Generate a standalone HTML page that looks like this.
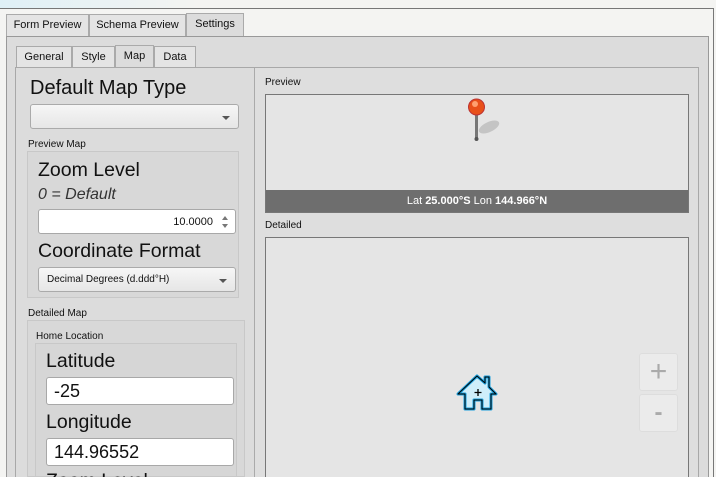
<!DOCTYPE html><html style="width:716px;height:477px;overflow:hidden"><head><style>
*{box-sizing:border-box;margin:0;padding:0}
body{width:716px;height:477px;overflow:hidden;background:#f4f4f2;font-family:"Liberation Sans","DejaVu Sans",sans-serif;position:relative;color:#111}
.a{position:absolute}
.tab{position:absolute;border:1px solid #aaa;border-bottom:none;font-size:11px;padding-top:4px;text-align:center;background:#e4e4e4}
.big{position:absolute;font-size:19.5px;color:#111}
.lab{position:absolute;font-size:10px}
.box{position:absolute;border:1px solid #c8c8c8;background:#d8d8d8}
.inp{position:absolute;background:#fff;border:1px solid #a8a8a8;border-radius:3px}
.combo{position:absolute;border:1px solid #aaa;border-radius:3px;background:linear-gradient(#f6f6f6,#e6e6e6);font-size:10px;padding:6px 8px}
.arr{position:absolute;right:8px;top:11px;width:0;height:0;border-left:4px solid transparent;border-right:4px solid transparent;border-top:4px solid #555}
</style></head><body>
<div class="a" style="left:0;top:0;width:200px;height:8px;background:linear-gradient(90deg,#dff0f6,#f4f4f2)"></div>
<div class="a" style="left:0;top:8px;width:714px;height:469px;border-top:1px solid #777;border-right:1px solid #777;background:#f4f4f2"></div>
<div class="tab" style="left:6px;top:14px;width:83px;height:22px">Form Preview</div>
<div class="tab" style="left:89px;top:14px;width:97px;height:22px">Schema Preview</div>
<div class="tab" style="left:186px;top:13px;width:58px;height:24px;background:#dcdcdc">Settings</div>
<div class="a" style="left:6px;top:36px;width:703px;height:441px;border:1px solid #999;border-bottom:none;background:#dcdcdc"></div>
<div class="tab" style="left:16px;top:46px;width:56px;height:21px">General</div>
<div class="tab" style="left:72px;top:46px;width:43px;height:21px">Style</div>
<div class="tab" style="left:115px;top:45px;width:39px;height:23px;background:#dcdcdc">Map</div>
<div class="tab" style="left:154px;top:46px;width:42px;height:21px">Data</div>
<div class="a" style="left:15px;top:67px;width:684px;height:410px;border:1px solid #a8a8a8;border-bottom:none;background:#dcdcdc"></div>
<div class="a" style="left:254px;top:68px;width:1px;height:409px;background:#aaa"></div>
<div class="a" style="left:255px;top:68px;width:443px;height:409px;background:#dedede"></div>

<div class="big" style="left:30px;top:77px;font-size:20px">Default Map Type</div>
<div class="combo" style="left:30px;top:104px;width:209px;height:25px"><div class="arr"></div></div>
<div class="lab" style="left:28px;top:139px">Preview Map</div>
<div class="box" style="left:27px;top:151px;width:212px;height:147px"></div>
<div class="big" style="left:38px;top:159px">Zoom Level</div>
<div class="big" style="left:38px;top:186px;font-size:16px;font-style:italic;color:#333">0 = Default</div>
<div class="inp" style="left:38px;top:209px;width:198px;height:25px;font-size:11px;text-align:right;padding:6px 22px 0 0">10.0000
<div class="a" style="right:7px;top:6px;border-left:3px solid transparent;border-right:3px solid transparent;border-bottom:4px solid #777"></div>
<div class="a" style="right:7px;top:14px;border-left:3px solid transparent;border-right:3px solid transparent;border-top:4px solid #777"></div></div>
<div class="big" style="left:38px;top:240px">Coordinate Format</div>
<div class="combo" style="left:38px;top:267px;width:198px;height:25px">Decimal Degrees (d.ddd°H)<div class="arr"></div></div>
<div class="lab" style="left:28px;top:308px">Detailed Map</div>
<div class="box" style="left:27px;top:320px;width:218px;height:157px"></div>
<div class="lab" style="left:36px;top:331px">Home Location</div>
<div class="box" style="left:35px;top:343px;width:202px;height:134px;background:#d6d6d6"></div>
<div class="big" style="left:46px;top:350px">Latitude</div>
<div class="inp" style="left:46px;top:377px;width:188px;height:28px;font-size:18px;padding:3px 0 0 7px">-25</div>
<div class="big" style="left:46px;top:411px">Longitude</div>
<div class="inp" style="left:46px;top:438px;width:188px;height:28px;font-size:18px;padding:3px 0 0 7px">144.96552</div>
<div class="a" style="left:46px;top:468px;width:150px;height:9px;overflow:hidden"><div class="big" style="left:0;top:2px">Zoom Level</div></div>

<div class="lab" style="left:265px;top:77px">Preview</div>
<div class="a" style="left:265px;top:94px;width:424px;height:119px;border:1px solid #777;background:#e5e5e5"></div>
<div class="a" style="left:266px;top:190px;width:422px;height:22px;background:#6e6e6e;color:#fff;font-size:11px;text-align:center;padding-top:5px">Lat <b>25.000°S</b> Lon <b>144.966°N</b></div>
<svg class="a" style="left:465px;top:96px" width="40" height="48">
<ellipse cx="24" cy="31" rx="11" ry="5" fill="#c4c4c4" transform="rotate(-25 24 31)"/>
<rect x="10" y="18" width="3" height="25" fill="#777"/>
<circle cx="11.5" cy="43" r="2" fill="#555"/>
<circle cx="11.5" cy="11" r="8" fill="#e8501a" stroke="#b33" stroke-width="1"/>
<circle cx="10" cy="8" r="3" fill="#ffa070"/>
</svg>
<div class="lab" style="left:265px;top:220px">Detailed</div>
<div class="a" style="left:265px;top:237px;width:424px;height:240px;border:1px solid #777;border-bottom:none;background:#e5e5e5"></div>
<svg class="a" style="left:455px;top:372px" width="46" height="42">
<path d="M3 22 L22 4 L30 11 L30 5 L34 5 L34 15 L41 22 L36 22 L36 37 L27 37 L27 28 L19 28 L19 37 L10 37 L10 22 Z" fill="#cfeefa" stroke="#1aa0dd" stroke-width="3" stroke-linejoin="round"/>
<path d="M3 22 L22 4 L30 11 L30 5 L34 5 L34 15 L41 22 L36 22 L36 37 L27 37 L27 28 L19 28 L19 37 L10 37 L10 22 Z" fill="none" stroke="#000" stroke-width="1" stroke-linejoin="round"/>
<path d="M23 17v7M19.5 20.5h7" stroke="#000" stroke-width="1.3"/>
</svg>
<div class="a" style="left:639px;top:353px;width:39px;height:38px;border:1px solid #ddd;border-radius:3px;background:#ebebeb;color:#aaa;font-size:30px;text-align:center;line-height:36px">+</div>
<div class="a" style="left:639px;top:394px;width:39px;height:38px;border:1px solid #ddd;border-radius:3px;background:#ebebeb;color:#aaa;font-size:24px;font-weight:bold;text-align:center;line-height:36px">-</div>
</body></html>
